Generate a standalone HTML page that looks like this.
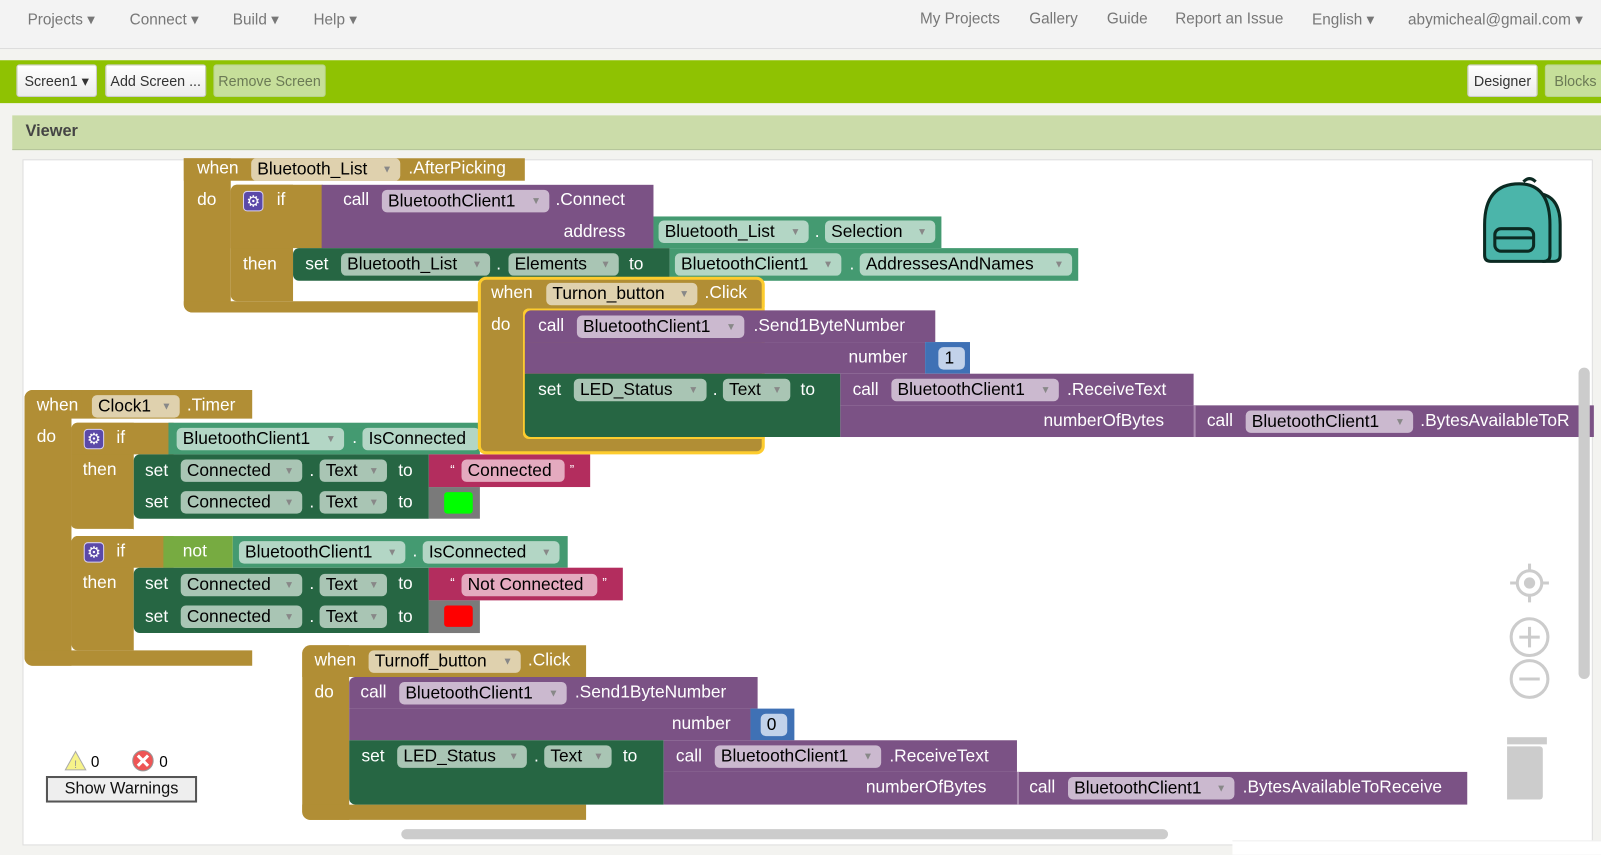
<!DOCTYPE html>
<html><head><meta charset="utf-8"><style>
*{margin:0;padding:0;box-sizing:border-box}
body{width:1601px;height:854px;overflow:hidden;background:#f3f3f0;font-family:"Liberation Sans",sans-serif;position:relative}
#w{position:absolute;left:0;top:0;width:1568px;height:837px;transform:scale(1.02105);transform-origin:0 0;overflow:hidden}
.a{position:absolute}
.nav{left:0;top:0;width:1568px;height:48px;background:#f3f3f3;border-bottom:1px solid #ddd}
.nt{position:absolute;top:10px;font-size:15px;color:#777}
.bar{left:0;top:59px;width:1568px;height:42px;background:#8fc202}
.btn{position:absolute;top:63px;height:32px;border-radius:3px;background:linear-gradient(#fff,#ececec);border:1px solid #ccc;font-size:14px;line-height:30px;text-align:center;color:#333}
.dis{background:#c6df9a;border-color:#b8d48a;color:#6b7a55}
.vh{left:12px;top:113px;width:1556px;height:34px;background:#cbdca9;border-bottom:1px solid #b5c49a}
.ws{left:22px;top:156px;width:1538px;height:672px;background:#fff;border:1px solid #ddd}
.g{background:#b18e35}.p{background:#7b5285}.dg{background:#266643}.tl{background:#449a71}.pk{background:#b32d5e}.bl{background:#3f71b5}.lg{background:#77ab41}.gr{background:#7a7a7a}
.t{position:absolute;color:#fff;font-size:17px;line-height:22px;white-space:nowrap}
.f{position:absolute;height:22px;border-radius:5px;color:#000;font-size:17px;line-height:22px;padding-left:6px;white-space:nowrap;overflow:hidden}
.f i{font-style:normal;font-size:10px;color:#888;position:absolute;right:8px;top:1px}
.fg{background:#dfd1ae}.fp{background:#cbb9cf}.fd{background:#a9c5b4}.ft{background:#b3d6c5}.fk{background:#e4aabf}.fb{background:#c2d2ea}
.gear{position:absolute;width:20px;height:20px;border-radius:4px;background:#5b49a8;color:#fff;font-size:15px;line-height:20px;text-align:center;border:1px solid #d8d0f0}
</style></head><body><div id="w">
<div class="a nav"></div>
<div class="nt" style="left:27px">Projects ▾</div>
<div class="nt" style="left:127px">Connect ▾</div>
<div class="nt" style="left:228px">Build ▾</div>
<div class="nt" style="left:307px">Help ▾</div>
<div class="nt" style="left:901px">My Projects</div>
<div class="nt" style="left:1008px">Gallery</div>
<div class="nt" style="left:1084px">Guide</div>
<div class="nt" style="left:1151px">Report an Issue</div>
<div class="nt" style="left:1285px">English ▾</div>
<div class="nt" style="left:1379px">abymicheal@gmail.com ▾</div>
<div class="a bar"></div>
<div class="btn" style="left:16px;width:79px">Screen1 ▾</div>
<div class="btn" style="left:103px;width:99px">Add Screen ...</div>
<div class="btn dis" style="left:209px;width:110px">Remove Screen</div>
<div class="btn" style="left:1437px;width:69px">Designer</div>
<div class="btn dis" style="left:1513px;width:60px">Blocks</div>
<div class="a vh"></div>
<div class="a" style="left:25px;top:120px;font-size:16px;font-weight:bold;color:#444">Viewer</div>
<div class="a ws"></div>

<!-- Block 1 AfterPicking -->
<div class="a g" style="left:180px;top:155px;width:334px;height:22px"></div>
<div class="a g" style="left:180px;top:155px;width:46px;height:151px;border-bottom-left-radius:8px"></div>
<div class="a g" style="left:180px;top:295px;width:290px;height:11px;border-bottom-left-radius:8px"></div>
<div class="a g" style="left:226px;top:181px;width:61px;height:114px;border-radius:6px 0 0 6px"></div>
<div class="a g" style="left:226px;top:181px;width:90px;height:62px;border-radius:6px 0 0 0"></div>
<div class="a p" style="left:315px;top:181px;width:325px;height:62px"></div>
<div class="t" style="left:193px;top:154px">when</div>
<div class="f fg" style="left:246px;top:155px;width:146px">Bluetooth_List<i>▼</i></div>
<div class="t" style="left:400px;top:154px">.AfterPicking</div>
<div class="t" style="left:193px;top:185px">do</div>
<div class="gear" style="left:238px;top:187px">⚙</div>
<div class="t" style="left:271px;top:185px">if</div>
<div class="t" style="left:336px;top:185px">call</div>
<div class="f fp" style="left:374px;top:186px;width:164px">BluetoothClient1<i>▼</i></div>
<div class="t" style="left:544px;top:185px">.Connect</div>
<div class="t" style="left:552px;top:216px">address</div>
<div class="a tl" style="left:640px;top:212px;width:282px;height:31px"></div>
<div class="f ft" style="left:645px;top:216px;width:147px">Bluetooth_List<i>▼</i></div>
<div class="t" style="left:798px;top:216px">.</div>
<div class="f ft" style="left:808px;top:216px;width:108px">Selection<i>▼</i></div>
<div class="t" style="left:238px;top:248px">then</div>
<div class="a dg" style="left:287px;top:243px;width:369px;height:32px;border-radius:6px 0 0 6px"></div>
<div class="t" style="left:299px;top:248px">set</div>
<div class="f fd" style="left:334px;top:248px;width:146px">Bluetooth_List<i>▼</i></div>
<div class="t" style="left:486px;top:248px">.</div>
<div class="f fd" style="left:498px;top:248px;width:108px">Elements<i>▼</i></div>
<div class="t" style="left:616px;top:248px">to</div>
<div class="a tl" style="left:656px;top:243px;width:400px;height:32px"></div>
<div class="f ft" style="left:661px;top:248px;width:163px">BluetoothClient1<i>▼</i></div>
<div class="t" style="left:832px;top:248px">.</div>
<div class="f ft" style="left:842px;top:248px;width:208px">AddressesAndNames<i>▼</i></div>

<!-- Clock1 -->
<div class="a g" style="left:24px;top:382px;width:223px;height:28px;border-top-left-radius:8px"></div>
<div class="a g" style="left:24px;top:382px;width:46px;height:270px;border-radius:8px 0 0 8px"></div>
<div class="a g" style="left:24px;top:637px;width:223px;height:15px;border-bottom-left-radius:8px"></div>
<div class="t" style="left:36px;top:386px">when</div>
<div class="f fg" style="left:90px;top:387px;width:86px">Clock1<i>▼</i></div>
<div class="t" style="left:183px;top:386px">.Timer</div>
<div class="t" style="left:36px;top:417px">do</div>
<div class="a g" style="left:70px;top:414px;width:61px;height:106px;border-radius:6px 0 0 6px;border-bottom:2px solid #fff"></div>
<div class="a g" style="left:70px;top:414px;width:100px;height:31px;border-top-left-radius:6px"></div>
<div class="gear" style="left:82px;top:420px">⚙</div>
<div class="t" style="left:114px;top:418px">if</div>
<div class="t" style="left:81px;top:449px">then</div>
<div class="a tl" style="left:165px;top:414px;width:305px;height:31px"></div>
<div class="f ft" style="left:173px;top:419px;width:164px">BluetoothClient1<i>▼</i></div>
<div class="t" style="left:345px;top:418px">.</div>
<div class="f ft" style="left:355px;top:419px;width:115px">IsConnected</div>
<div class="a dg" style="left:131px;top:445px;width:289px;height:63px;border-radius:6px 0 0 6px"></div>
<div class="t" style="left:142px;top:450px">set</div>
<div class="f fd" style="left:177px;top:450px;width:119px">Connected<i>▼</i></div>
<div class="t" style="left:303px;top:450px">.</div>
<div class="f fd" style="left:313px;top:450px;width:66px">Text<i>▼</i></div>
<div class="t" style="left:390px;top:450px">to</div>
<div class="a pk" style="left:420px;top:445px;width:158px;height:32px"></div>
<div class="t" style="left:441px;top:449px;font-size:13px">“</div>
<div class="f fk" style="left:452px;top:450px;width:101px">Connected</div>
<div class="t" style="left:558px;top:449px;font-size:13px">”</div>
<div class="t" style="left:142px;top:481px">set</div>
<div class="f fd" style="left:177px;top:481px;width:119px">Connected<i>▼</i></div>
<div class="t" style="left:303px;top:481px">.</div>
<div class="f fd" style="left:313px;top:481px;width:66px">Text<i>▼</i></div>
<div class="t" style="left:390px;top:481px">to</div>
<div class="a gr" style="left:420px;top:477px;width:50px;height:31px"></div>
<div class="a" style="left:435px;top:482px;width:28px;height:21px;background:#00ff00;border-radius:3px"></div>

<div class="a g" style="left:70px;top:525px;width:61px;height:112px;border-radius:6px 0 0 6px"></div>
<div class="a g" style="left:70px;top:525px;width:100px;height:31px;border-top-left-radius:6px"></div>
<div class="gear" style="left:82px;top:531px">⚙</div>
<div class="t" style="left:114px;top:529px">if</div>
<div class="t" style="left:81px;top:560px">then</div>
<div class="a lg" style="left:160px;top:525px;width:68px;height:31px"></div>
<div class="t" style="left:179px;top:529px">not</div>
<div class="a tl" style="left:228px;top:525px;width:328px;height:31px"></div>
<div class="f ft" style="left:234px;top:530px;width:163px">BluetoothClient1<i>▼</i></div>
<div class="t" style="left:404px;top:529px">.</div>
<div class="f ft" style="left:414px;top:530px;width:134px">IsConnected<i>▼</i></div>
<div class="a dg" style="left:131px;top:556px;width:289px;height:64px;border-radius:6px 0 0 6px"></div>
<div class="t" style="left:142px;top:561px">set</div>
<div class="f fd" style="left:177px;top:562px;width:119px">Connected<i>▼</i></div>
<div class="t" style="left:303px;top:561px">.</div>
<div class="f fd" style="left:313px;top:562px;width:66px">Text<i>▼</i></div>
<div class="t" style="left:390px;top:561px">to</div>
<div class="a pk" style="left:420px;top:556px;width:190px;height:32px"></div>
<div class="t" style="left:441px;top:560px;font-size:13px">“</div>
<div class="f fk" style="left:452px;top:562px;width:133px">Not Connected</div>
<div class="t" style="left:590px;top:560px;font-size:13px">”</div>
<div class="t" style="left:142px;top:593px">set</div>
<div class="f fd" style="left:177px;top:593px;width:119px">Connected<i>▼</i></div>
<div class="t" style="left:303px;top:593px">.</div>
<div class="f fd" style="left:313px;top:593px;width:66px">Text<i>▼</i></div>
<div class="t" style="left:390px;top:593px">to</div>
<div class="a gr" style="left:420px;top:588px;width:50px;height:32px"></div>
<div class="a" style="left:435px;top:593px;width:28px;height:21px;background:#ff0000;border-radius:3px"></div>

<!-- Turnon (selected) -->
<div class="a" style="left:468px;top:271px;width:281px;height:174px;border:3px solid #fdcc2e;border-radius:8px;background:#b18e35"></div>
<div class="a" style="left:749px;top:301px;width:10px;height:127px;background:#fff"></div>
<div class="t" style="left:481px;top:276px">when</div>
<div class="f fg" style="left:535px;top:277px;width:148px">Turnon_button<i>▼</i></div>
<div class="t" style="left:690px;top:276px">.Click</div>
<div class="t" style="left:481px;top:307px">do</div>
<div class="a" style="left:512px;top:302px;width:237px;height:128px;border:3px solid #fdcc2e;border-right:none;border-radius:6px 0 0 6px"></div>
<div class="a p" style="left:514px;top:304px;width:402px;height:31px;border-top-left-radius:6px"></div>
<div class="a p" style="left:514px;top:335px;width:392px;height:31px"></div>
<div class="t" style="left:527px;top:308px">call</div>
<div class="f fp" style="left:565px;top:309px;width:164px">BluetoothClient1<i>▼</i></div>
<div class="t" style="left:738px;top:308px">.Send1ByteNumber</div>
<div class="t" style="left:831px;top:339px">number</div>
<div class="a bl" style="left:906px;top:335px;width:44px;height:31px"></div>
<div class="f fb" style="left:919px;top:340px;width:26px">1</div>
<div class="a dg" style="left:514px;top:366px;width:309px;height:62px;border-bottom-left-radius:6px"></div>
<div class="t" style="left:527px;top:371px">set</div>
<div class="f fd" style="left:562px;top:371px;width:130px">LED_Status<i>▼</i></div>
<div class="t" style="left:698px;top:371px">.</div>
<div class="f fd" style="left:708px;top:371px;width:66px">Text<i>▼</i></div>
<div class="t" style="left:784px;top:371px">to</div>
<div class="a p" style="left:823px;top:366px;width:346px;height:31px"></div>
<div class="a p" style="left:823px;top:397px;width:738px;height:31px"></div>
<div class="t" style="left:835px;top:371px">call</div>
<div class="f fp" style="left:873px;top:371px;width:164px">BluetoothClient1<i>▼</i></div>
<div class="t" style="left:1045px;top:371px">.ReceiveText</div>
<div class="t" style="left:1022px;top:401px">numberOfBytes</div>
<div class="a" style="left:1169px;top:397px;width:2px;height:31px;background:#a98aaf"></div>
<div class="t" style="left:1182px;top:401px">call</div>
<div class="f fp" style="left:1220px;top:402px;width:164px">BluetoothClient1<i>▼</i></div>
<div class="t" style="left:1391px;top:401px;width:155px;overflow:hidden">.BytesAvailableToR</div>

<!-- Turnoff -->
<div class="a g" style="left:296px;top:632px;width:278px;height:31px;border-top-left-radius:8px"></div>
<div class="a g" style="left:296px;top:632px;width:46px;height:171px;border-radius:8px 0 0 8px"></div>
<div class="a g" style="left:296px;top:788px;width:278px;height:15px;border-bottom-left-radius:8px"></div>
<div class="t" style="left:308px;top:636px">when</div>
<div class="f fg" style="left:361px;top:637px;width:149px">Turnoff_button<i>▼</i></div>
<div class="t" style="left:517px;top:636px">.Click</div>
<div class="t" style="left:308px;top:667px">do</div>
<div class="a p" style="left:342px;top:663px;width:400px;height:31px;border-top-left-radius:6px"></div>
<div class="a p" style="left:342px;top:694px;width:393px;height:31px"></div>
<div class="t" style="left:353px;top:667px">call</div>
<div class="f fp" style="left:391px;top:668px;width:164px">BluetoothClient1<i>▼</i></div>
<div class="t" style="left:563px;top:667px">.Send1ByteNumber</div>
<div class="t" style="left:658px;top:698px">number</div>
<div class="a bl" style="left:735px;top:694px;width:43px;height:31px"></div>
<div class="f fb" style="left:745px;top:699px;width:26px">0</div>
<div class="a dg" style="left:342px;top:725px;width:308px;height:63px;border-bottom-left-radius:6px"></div>
<div class="t" style="left:354px;top:730px">set</div>
<div class="f fd" style="left:389px;top:730px;width:127px">LED_Status<i>▼</i></div>
<div class="t" style="left:523px;top:730px">.</div>
<div class="f fd" style="left:533px;top:730px;width:66px">Text<i>▼</i></div>
<div class="t" style="left:610px;top:730px">to</div>
<div class="a p" style="left:650px;top:725px;width:346px;height:31px"></div>
<div class="a p" style="left:650px;top:756px;width:787px;height:32px"></div>
<div class="t" style="left:662px;top:730px">call</div>
<div class="f fp" style="left:700px;top:730px;width:163px">BluetoothClient1<i>▼</i></div>
<div class="t" style="left:871px;top:730px">.ReceiveText</div>
<div class="t" style="left:848px;top:760px">numberOfBytes</div>
<div class="a" style="left:996px;top:756px;width:2px;height:32px;background:#a98aaf"></div>
<div class="t" style="left:1008px;top:760px">call</div>
<div class="f fp" style="left:1046px;top:761px;width:163px">BluetoothClient1<i>▼</i></div>
<div class="t" style="left:1217px;top:760px">.BytesAvailableToReceive</div>

<!-- backpack -->
<svg class="a" style="left:1448px;top:170px" width="86" height="90" viewBox="0 0 86 90">
<path d="M44 8 q6 -6 12 0" stroke="#0b2a22" stroke-width="3" fill="none"/>
<path d="M62 20 q18 4 18 30 v30 q0 6 -6 6 h-10 z" fill="#4bb5aa" stroke="#0b2a22" stroke-width="3"/>
<path d="M6 50 q0 -40 34 -40 q30 0 30 40 v30 q0 6 -6 6 h-52 q-6 0 -6 -6 z" fill="#4bb5aa" stroke="#0b2a22" stroke-width="3"/>
<rect x="16" y="54" width="38" height="22" rx="6" fill="#4bb5aa" stroke="#0b2a22" stroke-width="3"/>
<line x1="16" y1="63" x2="54" y2="63" stroke="#0b2a22" stroke-width="3"/>
</svg>
<!-- controls -->
<svg class="a" style="left:1476px;top:548px" width="46" height="240" viewBox="0 0 46 240">
<g stroke="#ccc" stroke-width="3" fill="none">
<circle cx="22" cy="23" r="12"/><circle cx="22" cy="23" r="4" fill="#ccc"/>
<line x1="22" y1="4" x2="22" y2="10"/><line x1="22" y1="36" x2="22" y2="42"/><line x1="3" y1="23" x2="9" y2="23"/><line x1="35" y1="23" x2="41" y2="23"/>
<circle cx="22" cy="76" r="18"/><line x1="12" y1="76" x2="32" y2="76"/><line x1="22" y1="66" x2="22" y2="86"/>
<circle cx="22" cy="117" r="18"/><line x1="12" y1="117" x2="32" y2="117"/>
</g>
<rect x="-13" y="174" width="52" height="7" fill="#ccc"/>
<rect x="-11" y="183" width="46" height="52" rx="3" fill="#ccc"/>
</svg>
<div class="a" style="left:1546px;top:360px;width:11px;height:305px;background:#ccc;border-radius:6px"></div>
<div class="a" style="left:393px;top:812px;width:751px;height:10px;background:#ccc;border-radius:5px"></div>
<!-- warnings -->
<svg class="a" style="left:63px;top:735px" width="22" height="20"><path d="M11 1 L21 19 H1 Z" fill="#f7f38a" stroke="#aaa"/><text x="11" y="17" font-size="11" text-anchor="middle" fill="#999" font-family="Liberation Sans">!</text></svg>
<div class="a" style="left:89px;top:738px;font-size:15px">0</div>
<svg class="a" style="left:129px;top:734px" width="22" height="22"><circle cx="11" cy="11" r="10" fill="#e55" stroke="#999"/><path d="M6 6 L16 16 M16 6 L6 16" stroke="#fff" stroke-width="3"/></svg>
<div class="a" style="left:156px;top:738px;font-size:15px">0</div>
<div class="a" style="left:45px;top:760px;width:148px;height:26px;border:2px solid #555;background:#eee;font-size:16px;text-align:center;line-height:22px;color:#111">Show Warnings</div>
<div class="a" style="left:1207px;top:823px;width:394px;height:31px;background:#fff;border-top:1px solid #eee"></div>
</div></body></html>
